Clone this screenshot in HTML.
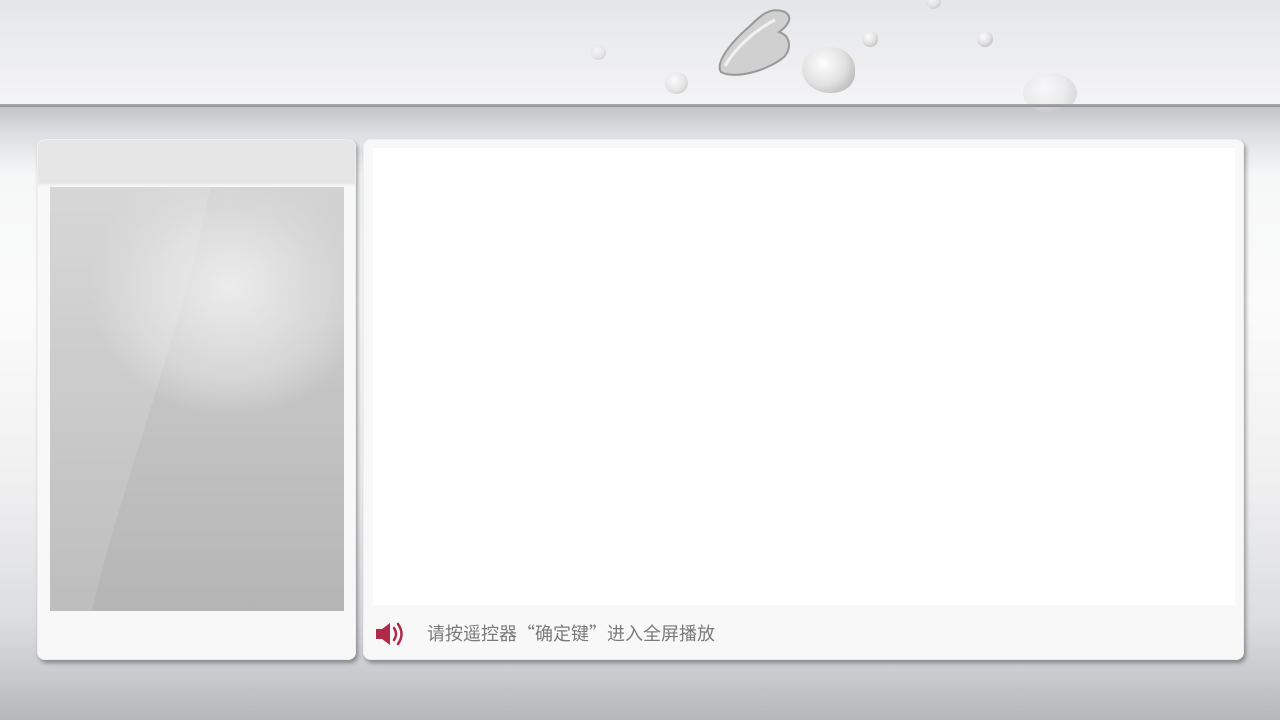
<!DOCTYPE html>
<html><head><meta charset="utf-8"><style>
*{margin:0;padding:0;box-sizing:border-box}
body{width:1280px;height:720px;overflow:hidden;position:relative;font-family:"Liberation Sans","Noto Sans CJK SC",sans-serif;
background:linear-gradient(180deg,#c3c4c8 107px,#dedfe2 135px,#f6f7f7 175px,#fbfbfb 300px,#f0f0f1 480px,#dcdde0 620px,#c7c8cc 680px,#b6b7bb 720px);}
.hdr{position:absolute;left:0;top:0;width:1280px;height:104px;background:linear-gradient(180deg,#e5e6ea,#f4f4f6)}
.line{position:absolute;left:0;top:104px;width:1280px;height:3px;background:linear-gradient(180deg,#a9aaae,#8f9094)}
.panel{position:absolute;top:139px;height:521px;border-radius:8px;background:#f8f8f8;box-shadow:2px 3px 4px rgba(0,0,0,.35),0 0 0 1px #eee inset}
.p1{left:37px;width:319px;background:linear-gradient(180deg,#e6e6e6 0,#e6e6e6 44px,#f3f3f3 46px,#f8f8f8 48px)}
.p2{left:363px;width:881px}
.img{position:absolute;left:50px;top:187px;width:294px;height:424px;overflow:hidden;
background:radial-gradient(ellipse 140px 130px at 180px 100px,#ececec,#d6d6d6 70%,rgba(194,194,194,0) 100%),linear-gradient(180deg,#d2d2d2,#c4c4c4 50%,#b5b5b5)}
.txt{position:absolute;left:427px;top:620px;font-size:18px;color:#7a7a7a;white-space:nowrap;font-family:"Noto Sans CJK SC",sans-serif}
.wht{position:absolute;left:373px;top:148px;width:862px;height:457px;background:#fff}
.drop{position:absolute;border-radius:50%;background:radial-gradient(circle at 40% 35%,#fff,#e0e0e0 50%,#b0b0b0 85%,#888);opacity:.9}
</style></head><body>
<div class="hdr"></div>
<div class="drop" style="left:591px;top:45px;width:15px;height:15px;opacity:.5"></div>
<div class="drop" style="left:665px;top:72px;width:23px;height:22px;opacity:.6"></div>
<div class="drop" style="left:862px;top:31px;width:16px;height:16px"></div>
<div class="drop" style="left:977px;top:31px;width:16px;height:16px"></div>
<div class="drop" style="left:926px;top:-6px;width:15px;height:15px;opacity:.6"></div>
<div class="drop" style="left:802px;top:47px;width:53px;height:46px;border-radius:50% 50% 45% 55%"></div>
<div class="drop" style="left:1023px;top:73px;width:54px;height:40px;opacity:.4"></div>
<svg style="position:absolute;left:715px;top:8px" width="80" height="72"><path d="M6 64C0 55 15 35 35 18C45 8 55 -2 70 4C80 10 70 20 64 24C76 28 76 40 70 48C55 62 20 72 6 64Z" fill="#d0d0d0" stroke="#999" stroke-width="2"/><path d="M10 58C20 40 40 22 60 12" stroke="#fff" stroke-width="3" fill="none" opacity=".7"/></svg>
<div class="line"></div>
<div class="panel p1"></div>
<div class="img"><svg width="294" height="424" style="position:absolute;left:0;top:0"><path d="M0 0H160C140 120 70 300 42 424H0Z" fill="#fff" opacity=".12"/></svg></div>
<div class="panel p2"></div>
<div class="wht"></div>
<svg style="position:absolute;left:374px;top:619px" width="34" height="30" viewBox="0 0 34 30"><path d="M2 10h6l8-6v22l-8-6H2z" fill="#b02a4a"/><path d="M20 9q4 6 0 12M24 5q7 10 0 20" stroke="#b02a4a" stroke-width="2.5" fill="none" stroke-linecap="round"/></svg>
<div class="txt">请按遥控器“确定键”进入全屏播放</div>
</body></html>
